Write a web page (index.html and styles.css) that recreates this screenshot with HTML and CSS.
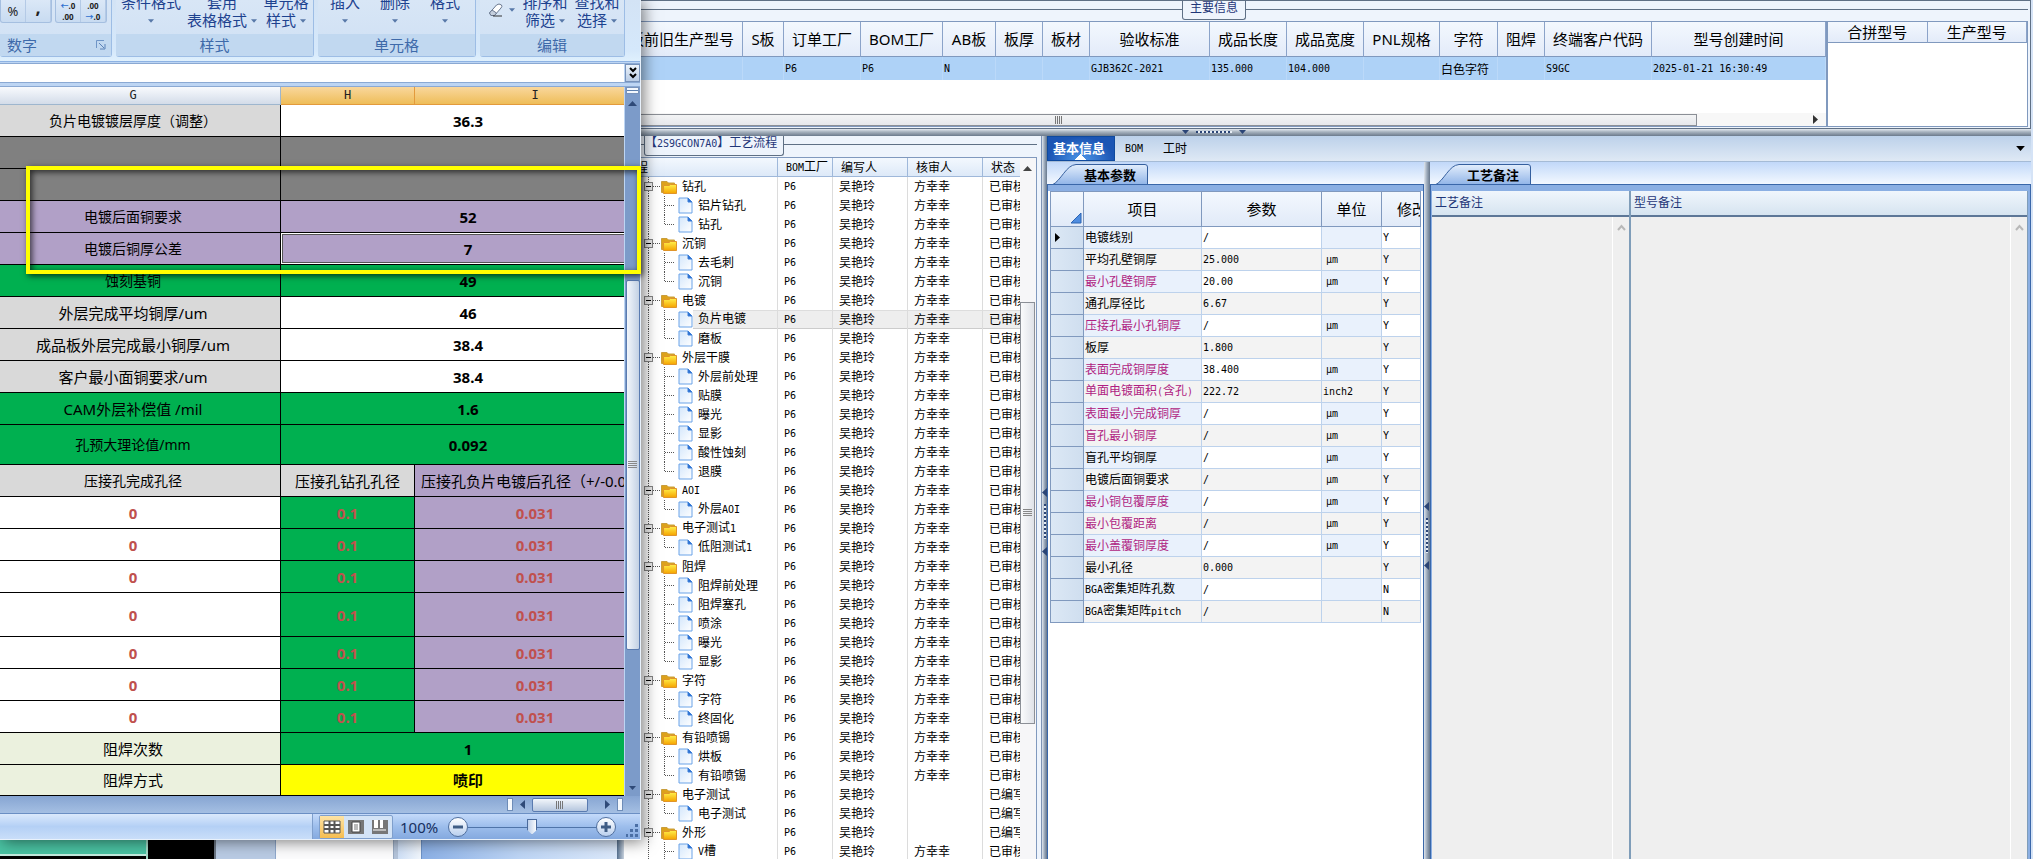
FILE: index.html
```html
<!DOCTYPE html>
<html lang="zh-CN">
<head>
    <meta charset="UTF-8">
    <meta name="viewport" content="width=device-width, initial-scale=1.0">
    <title>工艺流程</title>
    <link rel="stylesheet" href="styles.css">
</head>
<body>
    <svg class="symbols" aria-hidden="true">
        <linearGradient id="gold" x1="0" y1="0" x2="0" y2="1"><stop offset="0" stop-color="#fff04a"/><stop offset="1" stop-color="#f5a300"/></linearGradient>
        <linearGradient id="paper" x1="0" y1="0" x2="1" y2="1"><stop offset="0" stop-color="#d3e6fb"/><stop offset="1" stop-color="#ffffff"/></linearGradient>
        <symbol id="folder" viewBox="0 0 16 14">
            <path d="M0.5 12.5V1.5H6L7.5 3H13.5V12.5Z" fill="#dda21c" stroke="#c99e3d"/>
            <path d="M2.5 13.5V5.5H8L9.5 4.5H15.5V13.5Z" fill="url(#gold)" stroke="#e0952a"/>
        </symbol>
        <symbol id="file" viewBox="0 0 15 17">
            <path d="M1 1H10L14 5V16H1Z" fill="url(#paper)" stroke="#6ba3e8"/>
            <path d="M10 1V5H14Z" fill="#2a6fd0" stroke="#3c7fd8"/>
        </symbol>
        <symbol id="minus" viewBox="0 0 9 9">
            <rect x="0.5" y="0.5" width="8" height="8" fill="#ececec" stroke="#848484"/>
            <path d="M2 4.5H7" stroke="#000"/>
        </symbol>
        <symbol id="down" viewBox="0 0 7 4"><path d="M0 0H7L3.5 4Z" fill="currentColor"/></symbol>
        <symbol id="up" viewBox="0 0 9 5"><path d="M0 5H9L4.5 0Z" fill="currentColor"/></symbol>
        <symbol id="left" viewBox="0 0 5 9"><path d="M5 0V9L0 4.5Z" fill="currentColor"/></symbol>
        <symbol id="right" viewBox="0 0 5 9"><path d="M0 0V9L5 4.5Z" fill="currentColor"/></symbol>
    </svg>

    <div class="desktop">
        <div class="erp">
            <section class="main-info">
                <div class="caption-row"><span class="caption main-caption">主要信息</span></div>
                <div class="info-body">
                    <div class="info-left">
                        <table class="info-table">
                            <colgroup>
                                <col class="w119"><col class="w41"><col class="w77"><col class="w82"><col class="w53"><col class="w47"><col class="w47"><col class="w120"><col class="w77"><col class="w77"><col class="w76"><col class="w58"><col class="w47"><col class="w107"><col>
                            </colgroup>
                            <thead>
                                <tr><th class="cut">投板前旧生产型号</th><th>S板</th><th>订单工厂</th><th>BOM工厂</th><th>AB板</th><th>板厚</th><th>板材</th><th>验收标准</th><th>成品长度</th><th>成品宽度</th><th>PNL规格</th><th>字符</th><th>阻焊</th><th>终端客户代码</th><th>型号创建时间</th></tr>
                            </thead>
                            <tbody>
                                <tr><td></td><td></td><td>P6</td><td>P6</td><td>N</td><td></td><td></td><td>GJB362C-2021</td><td>135.000</td><td>104.000</td><td></td><td class="cjk">白色字符</td><td></td><td>S9GC</td><td>2025-01-21 16:30:49</td></tr>
                            </tbody>
                        </table>
                        <div class="hscroll">
                            <div class="hthumb"><span class="grip"></span></div>
                            <svg class="arrow-v"><use href="#right"/></svg>
                        </div>
                    </div>
                    <table class="merge-table">
                        <tr><th>合拼型号</th><th>生产型号</th></tr>
                        <tr><td></td><td></td></tr>
                    </table>
                </div>
            </section>
            <div class="splitter-h">
                <div class="handle-h"><svg class="arrow-h"><use href="#down"/></svg><span class="dots-h"></span><svg class="arrow-h"><use href="#down"/></svg></div>
            </div>
            <div class="lower">
                <section class="flow">
                    <div class="caption-row flow-row"><span class="caption flow-caption">【<span class="mono">2S9GCON7A0</span>】工艺流程</span></div>
                    <div class="tree-wrap">
                        <table class="tree">
                            <colgroup><col><col class="w55"><col class="w75"><col class="w75"><col class="w37"></colgroup>
                            <thead><tr><th class="first">程</th><th><span class="mono">BOM</span>工厂</th><th>编写人</th><th>核审人</th><th>状态</th></tr></thead>
                            <tbody id="treeRows"></tbody>
                        </table>
                        <div class="vscroll">
                            <svg class="arrow-up"><use href="#up"/></svg>
                            <div class="vthumb"><span class="grip-v"></span></div>
                        </div>
                    </div>
                </section>
                <div class="splitter-v">
                    <div class="handle-v"><svg class="arrow-v"><use href="#left"/></svg><span class="dots-v"></span><svg class="arrow-v"><use href="#left"/></svg></div>
                </div>
                <div class="detail">
                    <nav class="tabs">
                        <button class="tab active">基本信息</button>
                        <button class="tab"><span class="mono">BOM</span></button>
                        <button class="tab">工时</button>
                        <button class="more" aria-label="更多"><svg><use href="#down"/></svg></button>
                    </nav>
                    <div class="detail-body">
                        <section class="params">
                            <div class="subtabs">
                                <button class="subtab"><svg viewBox="0 0 96 21"><defs><linearGradient id="tabfill" x1="0" y1="0" x2="0" y2="1"><stop offset="0" stop-color="#e3eefc"/><stop offset="1" stop-color="#8fb3e7"/></linearGradient></defs><path d="M0 21C9 17 14 1 24 0.5H93Q95.500 0.500 95.500 3V21" fill="url(#tabfill)" stroke="#355f9e"/></svg><span>基本参数</span></button>
                            </div>
                            <div class="frame">
                                <table class="grid">
                                    <colgroup><col class="w33"><col class="w118"><col class="w120"><col class="w60"><col></colgroup>
                                    <thead><tr><th class="corner"><svg viewBox="0 0 12 12"><path d="M11 1V11H1Z" fill="#4f8de0" stroke="#2d64b3"/></svg></th><th>项目</th><th>参数</th><th>单位</th><th class="last">修改</th></tr></thead>
                                    <tbody id="paramRows"></tbody>
                                </table>
                            </div>
                        </section>
                        <div class="splitter-v right-split">
                            <div class="handle-v"><svg class="arrow-v"><use href="#left"/></svg><span class="dots-v"></span><svg class="arrow-v"><use href="#left"/></svg></div>
                        </div>
                        <section class="remarks">
                            <div class="subtabs">
                                <button class="subtab"><svg viewBox="0 0 96 21"><path d="M0 21C9 17 14 1 24 0.5H93Q95.500 0.500 95.500 3V21" fill="url(#tabfill)" stroke="#355f9e"/></svg><span>工艺备注</span></button>
                            </div>
                            <div class="frame remark-frame">
                                <div class="remark narrow">
                                    <label for="processNote">工艺备注</label>
                                    <div class="note"><textarea id="processNote"></textarea><span class="note-bar"><svg viewBox="0 0 9 7"><path d="M1 6L4.5 2L8 6" fill="none" stroke="#b8b8b8" stroke-width="2"/></svg></span></div>
                                </div>
                                <div class="remark">
                                    <label for="modelNote">型号备注</label>
                                    <div class="note"><textarea id="modelNote"></textarea><span class="note-bar"><svg viewBox="0 0 9 7"><path d="M1 6L4.5 2L8 6" fill="none" stroke="#b8b8b8" stroke-width="2"/></svg></span></div>
                                </div>
                            </div>
                        </section>
                    </div>
                </div>
            </div>
        </div>

        <div class="backdrop">
            <span class="bd-green"></span><span class="bd-black"></span><span class="bd-blue"></span><span class="bd-white"></span><span class="bd-pale"></span><span class="bd-sky"></span><span class="bd-edge"></span>
        </div>

        <div class="excel">
            <div class="ribbon">
                <div class="group g-number">
                    <div class="tools">
                        <div class="btn-pair"><button>%</button><button class="comma">,</button></div>
                        <div class="btn-pair small"><button><i>←</i>.0<br>.00</button><button>.00<br><i>→</i>.0</button></div>
                    </div>
                    <div class="group-name">数字<svg class="launcher" viewBox="0 0 10 10"><path d="M0.500 8V0.500H8" fill="none" stroke="#6f95c7"/><path d="M3 3L8 8M9 4V9H4" fill="none" stroke="#5b82b8"/></svg></div>
                </div>
                <div class="group g-style">
                    <div class="tools">
                        <button class="t60">条件格式<br><svg><use href="#down"/></svg></button>
                        <button class="t72">套用<br>表格格式 <svg><use href="#down"/></svg></button>
                        <button class="t45">单元格<br>样式 <svg><use href="#down"/></svg></button>
                    </div>
                    <div class="group-name">样式</div>
                </div>
                <div class="group g-cell">
                    <div class="tools">
                        <button class="t30">插入<br><svg><use href="#down"/></svg></button>
                        <button class="t30">删除<br><svg><use href="#down"/></svg></button>
                        <button class="t30">格式<br><svg><use href="#down"/></svg></button>
                    </div>
                    <div class="group-name">单元格</div>
                </div>
                <div class="group g-edit">
                    <div class="tools">
                        <button class="eraser" aria-label="清除"><svg class="rubber" viewBox="0 0 16 14"><path d="M1.500 10L8.500 2Q11 0 13.500 2Q14.500 3.500 13 5L6.500 12.500H3Z" fill="#fff" stroke="#6a7890"/><path d="M1.500 10L4 7L8.500 10L6.500 12.500H3Z" fill="#c5cfdd" stroke="#6a7890"/><path d="M5 13H14" stroke="#333"/></svg><svg><use href="#down"/></svg></button>
                        <button class="t45">排序和<br>筛选 <svg><use href="#down"/></svg></button>
                        <button class="t45">查找和<br>选择 <svg><use href="#down"/></svg></button>
                    </div>
                    <div class="group-name">编辑</div>
                </div>
            </div>
            <div class="formula">
                <input type="text" aria-label="编辑栏">
                <button aria-label="展开编辑栏"><svg viewBox="0 0 8 12"><path d="M1 1L4 4L7 1M1 7L4 10L7 7" fill="none" stroke="#000" stroke-width="2"/></svg></button>
            </div>
            <div class="sheet-row">
                <div class="sheet-view">
                    <table class="sheet">
                        <colgroup><col class="col-g"><col class="col-h"><col class="col-i"></colgroup>
                        <thead><tr><th>G</th><th class="sel">H</th><th class="sel">I</th></tr></thead>
                        <tbody>
                            <tr><td class="grey">负片电镀镀层厚度（调整）</td><td colspan="2">36.3</td></tr>
                            <tr><td class="dark"></td><td class="dark" colspan="2"></td></tr>
                            <tr><td class="dark"></td><td class="dark" colspan="2"></td></tr>
                            <tr><td class="purple">电镀后面铜要求</td><td class="purple" colspan="2">52</td></tr>
                            <tr><td class="purple">电镀后铜厚公差</td><td class="purple current" colspan="2">7</td></tr>
                            <tr><td class="green">蚀刻基铜</td><td class="green" colspan="2">49</td></tr>
                            <tr><td class="grey big">外层完成平均铜厚/um</td><td colspan="2">46</td></tr>
                            <tr><td class="grey big">成品板外层完成最小铜厚/um</td><td colspan="2">38.4</td></tr>
                            <tr><td class="grey big">客户最小面铜要求/um</td><td colspan="2">38.4</td></tr>
                            <tr><td class="green big">CAM外层补偿值 /mil</td><td class="green" colspan="2">1.6</td></tr>
                            <tr class="mid"><td class="green">孔预大理论值/mm</td><td class="green" colspan="2">0.092</td></tr>
                            <tr><td class="grey">压接孔完成孔径</td><td class="grey name">压接孔钻孔孔径</td><td class="purple name start">压接孔负片电镀后孔径（+/-0.05mm）</td></tr>
                            <tr class="red"><td>0</td><td class="green">0.1</td><td class="purple">0.031</td></tr>
                            <tr class="red"><td>0</td><td class="green">0.1</td><td class="purple">0.031</td></tr>
                            <tr class="red"><td>0</td><td class="green">0.1</td><td class="purple">0.031</td></tr>
                            <tr class="red tall"><td>0</td><td class="green">0.1</td><td class="purple">0.031</td></tr>
                            <tr class="red"><td>0</td><td class="green">0.1</td><td class="purple">0.031</td></tr>
                            <tr class="red"><td>0</td><td class="green">0.1</td><td class="purple">0.031</td></tr>
                            <tr class="red"><td>0</td><td class="green">0.1</td><td class="purple">0.031</td></tr>
                            <tr><td class="pale big">阻焊次数</td><td class="green" colspan="2">1</td></tr>
                            <tr class="short"><td class="pale big">阻焊方式</td><td class="yellow" colspan="2">喷印</td></tr>
                        </tbody>
                    </table>
                </div>
                <div class="sheet-scroll">
                    <span class="split-box"></span>
                    <svg class="arrow-up"><use href="#up"/></svg>
                    <span class="sheet-thumb"><span class="grip-v"></span></span>
                    <svg class="arrow-h"><use href="#down"/></svg>
                </div>
            </div>
            <div class="sheet-hscroll">
                <span class="stop"></span>
                <svg class="arrow-v"><use href="#left"/></svg>
                <span class="sheet-hthumb"><span class="grip"></span></span>
                <svg class="arrow-v"><use href="#right"/></svg>
                <span class="stop"></span>
            </div>
            <div class="status">
                <div class="status-text"></div>
                <div class="views">
                    <button class="on" aria-label="普通"><svg viewBox="0 0 18 16"><path d="M1 2H17V14H1Z" fill="#fff" stroke="#555"/><path d="M1 6H17M1 10H17M6.500 2V14M11.500 2V14" stroke="#555" stroke-width="2"/></svg></button>
                    <button aria-label="页面布局"><svg viewBox="0 0 18 16"><path d="M1 1H17V15H1Z" fill="#777"/><path d="M5 3H13V13H5Z" fill="#fff" stroke="#444"/><path d="M7 6H11M7 8H11M7 10H11" stroke="#777"/></svg></button>
                    <button aria-label="分页预览"><svg viewBox="0 0 18 16"><path d="M1 1H17V15H1Z" fill="#777"/><path d="M3 1H7V9H3ZM9 1H12V9H9Z" fill="#fff"/><path d="M2 11H15" stroke="#bbb" stroke-width="2"/></svg></button>
                </div>
                <label class="zoom" for="zoom">100%</label>
                <button class="round" aria-label="缩小"><svg viewBox="0 0 12 12"><path d="M1 6H11" stroke="#3f5d85" stroke-width="3"/></svg></button>
                <input id="zoom" type="range" min="0" max="100" value="50">
                <button class="round" aria-label="放大"><svg viewBox="0 0 12 12"><path d="M1 6H11M6 1V11" stroke="#3f5d85" stroke-width="3"/></svg></button>
                <svg class="resize" viewBox="0 0 13 13"><path d="M9 0H12V3H9ZM9 5H12V8H9ZM9 10H12V13H9ZM4 5H7V8H4ZM4 10H7V13H4ZM0 10H2V13H0Z" fill="#4a6fa5"/></svg>
            </div>
            <div class="highlight"></div>
        </div>
    </div>

    <script>
        const flow = [
            ['钻孔', ['铝片钻孔', '钻孔']],
            ['沉铜', ['去毛刺', '沉铜']],
            ['电镀', ['负片电镀', '磨板']],
            ['外层干膜', ['外层前处理', '贴膜', '曝光', '显影', '酸性蚀刻', '退膜']],
            ['AOI', ['外层AOI']],
            ['电子测试1', ['低阻测试1']],
            ['阻焊', ['阻焊前处理', '阻焊塞孔', '喷涂', '曝光', '显影']],
            ['字符', ['字符', '终固化']],
            ['有铅喷锡', ['烘板', '有铅喷锡']],
            ['电子测试', ['电子测试']],
            ['外形', ['V槽', '铣板']]
        ];
        // steps that are written but not reviewed yet
        const pending = ['电子测试', '外形'];

        const mono = text => text.replace(/[A-Za-z0-9()]+/g, '<span class="mono">$&</span>');

        function treeRow(name, cls, icon, reviewed) {
            const box = cls === 'root' ? '<svg class="box"><use href="#minus"/></svg>' : '';
            return `<tr class="${name === '负片电镀' ? 'selected' : ''}">
                <td class="node ${cls}"><div>${box}<svg class="${icon}"><use href="#${icon}"/></svg><span class="label">${mono(name)}</span></div></td>
                <td class="mono">P6</td><td>吴艳玲</td><td>${reviewed ? '方幸幸' : ''}</td><td>${reviewed ? '已审核' : '已编写'}</td></tr>`;
        }

        let tree = '';
        flow.forEach(([name, steps]) => {
            tree += treeRow(name, 'root', 'folder', !pending.includes(name));
            steps.forEach((step, i) => {
                const cls = i === steps.length - 1 ? 'leaf end' : 'leaf';
                tree += treeRow(step, cls, 'file', !pending.includes(step));
            });
        });
        document.getElementById('treeRows').innerHTML = tree;

        const params = [
            ['电镀线别', '/', '', 'Y', 0],
            ['平均孔壁铜厚', '25.000', 'μm', 'Y', 0],
            ['最小孔壁铜厚', '20.00', 'μm', 'Y', 1],
            ['通孔厚径比', '6.67', '', 'Y', 0],
            ['压接孔最小孔铜厚', '/', 'μm', 'Y', 1],
            ['板厚', '1.800', '', 'Y', 0],
            ['表面完成铜厚度', '38.400', 'μm', 'Y', 1],
            ['单面电镀面积(含孔)', '222.72', 'inch2', 'Y', 1],
            ['表面最小完成铜厚', '/', 'μm', 'Y', 1],
            ['盲孔最小铜厚', '/', 'μm', 'Y', 1],
            ['盲孔平均铜厚', '/', 'μm', 'Y', 0],
            ['电镀后面铜要求', '/', 'μm', 'Y', 0],
            ['最小铜包覆厚度', '/', 'μm', 'Y', 1],
            ['最小包覆距离', '/', 'μm', 'Y', 1],
            ['最小盖覆铜厚度', '/', 'μm', 'Y', 1],
            ['最小孔径', '0.000', '', 'Y', 0],
            ['BGA密集矩阵孔数', '/', '', 'N', 0],
            ['BGA密集矩阵pitch', '/', '', 'N', 0]
        ];
        document.getElementById('paramRows').innerHTML = params.map(([name, value, unit, edit, key], i) =>
            `<tr><th>${i === 0 ? '<svg class="arrow-v"><use href="#right"/></svg>' : ''}</th>
                <td class="item${key ? ' key' : ''}">${mono(name)}</td><td class="mono">${value}</td>
                <td class="unit mono${unit === 'μm' ? ' um' : ''}">${unit}</td><td class="mono last">${edit}</td></tr>`
        ).join('');
    </script>
</body>
</html>
```

FILE: styles.css
```css
* {
    box-sizing: border-box;
}

body, html {
    margin: 0;
    padding: 0;
    height: 100%;
    overflow: hidden;
}

body {
    font-family: "Noto Sans", "Noto Sans CJK SC", sans-serif;
    font-size: 12px;
    color: #000;
}

button {
    margin: 0;
    padding: 0;
    border: 0;
    background: none;
    font: inherit;
    color: inherit;
}

svg {
    display: block;
    flex: none;
}

table {
    border-collapse: separate;
    border-spacing: 0;
    table-layout: fixed;
}

th, td {
    padding: 0;
    font-weight: normal;
    white-space: nowrap;
    overflow: hidden;
}

.symbols {
    position: absolute;
    width: 0;
    height: 0;
}

.mono {
    font-family: "DejaVu Sans Mono", "Noto Sans CJK SC", monospace;
    font-size: 10px;
}

.desktop {
    position: relative;
    height: 100%;
    background: #dfe9f7;
}

/* ---------- ERP window ---------- */

.erp {
    position: absolute;
    left: 624px;
    right: 0;
    top: 0;
    bottom: 0;
    display: flex;
    flex-direction: column;
    padding-right: 2px;
    background: #d5e3f6;
}

.w33 { width: 33px; }
.w37 { width: 37px; }
.w41 { width: 41px; }
.w47 { width: 47px; }
.w53 { width: 53px; }
.w55 { width: 55px; }
.w58 { width: 58px; }
.w60 { width: 60px; }
.w75 { width: 75px; }
.w76 { width: 76px; }
.w77 { width: 77px; }
.w82 { width: 82px; }
.w107 { width: 107px; }
.w118 { width: 118px; }
.w119 { width: 119px; }
.w120 { width: 120px; }

.main-info {
    border-top: 1px solid #5f7085;
    border-bottom: 1px solid #5f7085;
    border-right: 1px solid #5f7085;
    background: #eef4fc;
    padding: 0 2px 1px 0;
}

.caption-row {
    display: flex;
    height: 20px;
    background: linear-gradient(#5f7085, #5f7085) 0 8px / 100% 1px no-repeat;
}

.caption {
    height: 19px;
    line-height: 14px;
    border: 1px solid #5f7085;
    border-top: 0;
    border-radius: 0 0 3px 3px;
    background: #eef4fc;
    color: #1f3678;
    white-space: nowrap;
}

.main-caption {
    margin-left: 558px;
    padding: 0 7px;
}

.info-body {
    display: flex;
    height: 106px;
    border: 1px solid #8099be;
    border-left: 0;
}

.info-left {
    flex: 1;
    display: flex;
    flex-direction: column;
    justify-content: space-between;
    background: #fff;
}

.info-table {
    width: 100%;
}

.info-table th, .merge-table th {
    height: 35px;
    padding-bottom: 2px;
    font-size: 15px;
    background: linear-gradient(#f3f8fe, #e3ebf9);
    border-right: 1px solid #8ba3c9;
    border-bottom: 1px solid #8099be;
}

.info-table th.cut {
    direction: rtl;
    text-align: right;
    padding-right: 9px;
}

.info-table td {
    height: 23px;
    padding-left: 1px;
    font-family: "DejaVu Sans Mono", monospace;
    font-size: 10px;
    background: #aed2f7;
    border-right: 1px solid #bbd9f9;
}

.info-table td.cjk {
    font-family: "Noto Sans CJK SC", sans-serif;
    font-size: 12px;
    line-height: 18px;
}

.hscroll {
    display: flex;
    align-items: center;
    justify-content: space-between;
    height: 13px;
    padding-right: 8px;
    background: #f7f7f7;
    color: #333;
}

.hthumb {
    display: flex;
    align-items: center;
    width: 1073px;
    height: 12px;
    padding-left: 430px;
    border: 1px solid #8b8f96;
    background: linear-gradient(#f3f4f5, #e6e8ec);
}

.grip {
    width: 8px;
    height: 8px;
    background: repeating-linear-gradient(90deg, #777 0 1px, transparent 1px 2px);
}

.grip-v {
    width: 9px;
    height: 8px;
    background: repeating-linear-gradient(#888 0 1px, transparent 1px 2px);
}

.arrow-v {
    width: 5px;
    height: 9px;
}

.arrow-h {
    width: 7px;
    height: 4px;
}

.arrow-up {
    width: 9px;
    height: 5px;
}

.merge-table {
    width: 201px;
    border-left: 2px solid #8099be;
    background: #fff;
}

.merge-table th {
    height: 21px;
    padding-bottom: 0;
    line-height: 20px;
}

.merge-table td {
    height: 83px;
}

.splitter-h {
    flex: none;
    height: 7px;
    background: linear-gradient(#e3e9f0, #a9b4c0 40%, #6b7a8c);
}

.handle-h {
    display: flex;
    align-items: center;
    justify-content: space-between;
    width: 64px;
    height: 6px;
    margin-left: 558px;
    color: #2b4576;
}

.dots-h {
    width: 36px;
    height: 2px;
    background: repeating-linear-gradient(90deg, #2b4576 0 2px, #e6edf5 2px 4px);
}

.lower {
    flex: 1;
    display: flex;
    min-height: 0;
}

/* ---------- process flow tree ---------- */

.flow {
    display: flex;
    flex-direction: column;
    width: 418px;
    padding-right: 4px;
    background: #eef4fc;
    border-right: 1px solid #7d93b4;
}

.flow-row {
    height: 21px;
    flex: none;
}

.flow-caption {
    margin-left: 20px;
    height: 20px;
    padding: 0 6px 0 0;
}

.tree-wrap {
    flex: 1;
    display: flex;
    min-height: 0;
    overflow: hidden;
    background: #fff;
    border-top: 1px solid #8099be;
    border-right: 1px solid #8099be;
}

.tree {
    width: 397px;
}

.tree thead th {
    height: 18px;
    line-height: 17px;
    text-align: left;
    padding-left: 8px;
    background: linear-gradient(#f3f8fe, #dde9f8);
    border-right: 1px solid #9fb8da;
    border-bottom: 1px solid #9fb8da;
}

.tree thead th.first {
    padding-left: 12px;
}

.tree thead th:last-child {
    border-right: 0;
}

.tree td {
    height: 19px;
    line-height: 18px;
    padding-left: 6px;
    border-right: 1px solid #dcdcdc;
}

.tree td:last-child {
    border-right: 0;
}

.tree .node {
    padding: 0;
    background-repeat: no-repeat;
}

.tree .node div {
    display: flex;
    align-items: center;
    height: 19px;
}

.tree .root {
    background-image:
        repeating-linear-gradient(#555 0 1px, transparent 1px 2px),
        repeating-linear-gradient(90deg, #555 0 1px, transparent 1px 2px);
    background-position: 24px 0, 29px 9px;
    background-size: 1px 100%, 7px 1px;
}

.tree .leaf {
    background-image:
        repeating-linear-gradient(#555 0 1px, transparent 1px 2px),
        repeating-linear-gradient(#555 0 1px, transparent 1px 2px),
        repeating-linear-gradient(90deg, #555 0 1px, transparent 1px 2px);
    background-position: 24px 0, 40px 0, 41px 9px;
    background-size: 1px 100%, 1px 100%, 10px 1px;
}

.tree .end {
    background-size: 1px 100%, 1px 10px, 10px 1px;
}

.tree .root div {
    padding-left: 20px;
}

.tree .leaf div {
    padding-left: 54px;
}

.box {
    width: 9px;
    height: 9px;
    margin-right: 8px;
}

.folder {
    width: 16px;
    height: 14px;
}

.file {
    width: 15px;
    height: 17px;
}

.label {
    padding-left: 5px;
}

.selected td {
    background-color: #eee;
    box-shadow: inset 0 1px #ddd, inset 0 -1px #ccc;
}

.selected .node {
    box-shadow: none;
    background-color: #fff;
}

.selected .label {
    flex: 1;
    height: 19px;
    background: #eee;
    box-shadow: inset 0 1px #ddd, inset 0 -1px #ccc;
}

.vscroll {
    flex: 1;
    display: flex;
    flex-direction: column;
    align-items: center;
    padding: 8px 1px 0 0;
    background: #f6f6f8;
    color: #444;
}

.vthumb {
    display: flex;
    align-items: center;
    justify-content: center;
    width: 15px;
    height: 422px;
    margin-top: 131px;
    border: 1px solid #8b8f96;
    background: linear-gradient(90deg, #fafbfc, #dfe2e8);
}

.splitter-v {
    flex: none;
    display: flex;
    align-items: center;
    width: 5px;
    background: linear-gradient(90deg, #dfe6ee, #9ba9ba 50%, #66778c);
}

.handle-v {
    display: flex;
    flex-direction: column;
    align-items: center;
    justify-content: space-between;
    height: 68px;
    color: #2b4576;
    margin-top: 48px;
}

.dots-v {
    width: 2px;
    height: 35px;
    background: repeating-linear-gradient(#2b4576 0 2px, #e6edf5 2px 4px);
}

/* ---------- detail panel ---------- */

.detail {
    flex: 1;
    display: flex;
    flex-direction: column;
    min-width: 0;
}

.tabs {
    display: flex;
    height: 26px;
    align-items: center;
    background: linear-gradient(#bcd1ea, #dfe9f5);
    border-bottom: 1px solid #a5bbd6;
}

.tab {
    height: 25px;
    padding: 0 10px;
    line-height: 20px;
}

.tab.active {
    padding: 0 9px 2px 5px;
    font-size: 13px;
    font-weight: bold;
    color: #fff;
    border: 1px solid #0f4a9e;
    background:
        conic-gradient(from 135deg at 50% 0, #fff 0 90deg, transparent 90deg) 50% 100% / 12px 6px no-repeat,
        radial-gradient(at 50% 100%, #4d96e8, #1b55b4 70%);
}

.more {
    margin-left: auto;
    padding: 8px 6px;
}

.more svg {
    width: 9px;
    height: 5px;
}

.detail-body {
    flex: 1;
    display: flex;
    min-height: 0;
}

.params {
    display: flex;
    flex-direction: column;
    width: 377px;
}

.subtabs {
    flex: none;
    height: 22px;
    padding: 2px 0 0 5px;
    background: linear-gradient(#c1d8f9, #f3f8ff);
}

.subtab {
    display: grid;
    width: 96px;
    height: 21px;
    align-items: center;
    font-size: 13px;
    font-weight: bold;
}

.subtab svg, .subtab span {
    grid-area: 1 / 1;
}

.subtab svg {
    width: 96px;
    height: 21px;
}

.subtab span {
    padding-left: 20px;
    line-height: 20px;
}

.frame {
    flex: 1;
    min-height: 0;
    padding: 6px 2px 0 2px;
    border: 1px solid #3a67a9;
    border-bottom: 0;
    background: #8bafe3;
    overflow: hidden;
}

.params .frame {
    background: linear-gradient(#8bafe3, #8bafe3) 0 0 / 100% 6px no-repeat, #fff;
}

.grid {
    width: 100%;
    border-left: 1px solid #8099be;
}

.grid thead th {
    height: 36px;
    padding-bottom: 1px;
    font-size: 15px;
    background: linear-gradient(#f3f8fe, #e1eaf8);
    border-right: 1px solid #8099be;
    border-bottom: 1px solid #8099be;
    border-top: 1px solid #8099be;
}

.grid thead th.corner {
    vertical-align: bottom;
    padding: 0 2px 2px 19px;
}

.corner svg {
    width: 12px;
    height: 12px;
}

.grid thead th.last {
    text-align: left;
    padding-left: 15px;
}

.grid tbody th {
    height: 22px;
    padding-left: 4px;
    background: linear-gradient(90deg, #dce8f5, #cfdeef);
    border-right: 1px solid #8099be;
    border-bottom: 1px solid #8099be;
}

.grid td {
    height: 22px;
    line-height: 20px;
    padding-left: 1px;
    border-right: 1px solid #bdd2ec;
    border-bottom: 1px solid #bdd2ec;
}

.grid tr:nth-child(odd) td {
    background: #fff;
}

.grid tr:nth-child(odd) .item, .grid tr:nth-child(odd) .unit {
    background: #e9f1fc;
}

.grid tr:nth-child(even) td {
    background: #f3f3f3;
}

.grid .key {
    color: #b01e82;
}

.grid .um {
    padding-left: 4px;
}

.right-split {
    width: 6px;
}

.right-split .handle-v {
    margin-top: 50px;
}

.remarks {
    flex: 1;
    display: flex;
    flex-direction: column;
    min-width: 0;
}

.remark-frame {
    display: flex;
    padding: 6px 2px 0 1px;
}

.remark {
    flex: 1;
    display: flex;
    flex-direction: column;
    background: #efefef;
    border-right: 1px solid #7f9db9;
}

.narrow {
    flex: none;
    width: 199px;
    border-right: 2px solid #7f9db9;
}

.remark label {
    height: 26px;
    padding-left: 3px;
    line-height: 24px;
    color: #1f3678;
    background: linear-gradient(#f0f6fc, #d6e4f0);
    border-bottom: 2px solid #5d7797;
}

.note {
    flex: 1;
    display: flex;
}

.note textarea {
    flex: 1;
    min-width: 0;
    border: 0;
    resize: none;
    background: #efefef;
}

.note-bar {
    width: 17px;
    padding: 7px 4px;
    border-left: 1px solid #fff;
}

.note-bar svg {
    width: 9px;
    height: 7px;
}

/* ---------- what shows under the spreadsheet window ---------- */

.backdrop {
    position: absolute;
    left: 0;
    bottom: 0;
    display: flex;
    width: 624px;
    height: 40px;
}

.bd-green {
    width: 148px;
    border-right: 2px solid #a5dcc9;
    background: linear-gradient(#4ac3a3 35px, #c4ebdf 35px 37px, #000 37px);
}

.bd-black {
    width: 66px;
    background: #000;
}

.bd-blue {
    width: 62px;
    border-left: 2px solid #6b7684;
    border-right: 1px solid #8fa8cc;
    background: #b9cbe4;
}

.bd-white {
    width: 118px;
    background: #fcfcfd;
    border-right: 1px solid #9aacc4;
}

.bd-pale {
    width: 28px;
    border-left: 4px solid #b4c4da;
    border-right: 1px solid #6d93c8;
    background: linear-gradient(90deg, #cfe0f7, #f2f7fd);
}

.bd-sky {
    flex: 1;
    background: linear-gradient(90deg, #8bb0e6, #bdd5f5 50%, #dce9fb);
}

.bd-edge {
    width: 7px;
    background: linear-gradient(90deg, #55708f, #c9d3df);
}

/* ---------- spreadsheet window ---------- */

.excel {
    position: absolute;
    left: 0;
    top: 0;
    width: 641px;
    background: #bdd5f3;
    border-right: 1px solid #e8f1fb;
    border-bottom: 1px solid #e8f1fb;
    box-shadow: 3px 2px 14px rgba(0, 0, 0, 0.5);
}

.ribbon {
    display: flex;
    gap: 4px;
    height: 62px;
    padding-bottom: 4px;
    overflow: hidden;
    background: linear-gradient(#d3e3f5, #d5e8fb 50px, #dff0fd);
    border-bottom: 1px solid #8db2e3;
    color: #1d428f;
    font-size: 15px;
}

.group {
    display: flex;
    flex-direction: column;
    border-right: 1px solid #9dbde5;
    border-bottom: 1px solid #9dbde5;
    border-radius: 0 0 3px 3px;
    background: linear-gradient(#d8e6f6, #cfe0f4);
}

.g-number { width: 112px; }
.g-style { width: 198px; }
.g-cell { width: 158px; }
.g-edit { width: 145px; }

.tools {
    display: flex;
    height: 35px;
}

.tools button {
    height: 36px;
    margin-top: -7px;
    line-height: 18px;
    white-space: nowrap;
    text-align: center;
}

.tools button svg {
    display: inline-block;
    width: 6px;
    height: 4px;
    vertical-align: 3px;
    color: #5778a8;
}

.g-style .tools {
    gap: 5px;
    padding-left: 5px;
}

.g-cell .tools {
    gap: 20px;
    padding-left: 12px;
}

.g-edit .tools {
    gap: 6px;
    padding-left: 8px;
}

.t30 { width: 30px; }
.t45 { width: 46px; }
.t60 { width: 60px; }
.t72 { width: 72px; }

.group-name {
    display: flex;
    justify-content: center;
    align-items: center;
    height: 22px;
    line-height: 21px;
    background: #c1d8f0;
    color: #3e6aaa;
}

.g-number .group-name {
    justify-content: space-between;
    padding: 0 5px 0 7px;
}

.launcher {
    width: 10px;
    height: 10px;
}

.btn-pair {
    display: flex;
    width: 52px;
    height: 23px;
    margin-right: 3px;
    border: 1px solid #a5bfe0;
    border-top: 0;
    border-radius: 0 0 3px 3px;
    background: linear-gradient(#dbe8f7, #c8dbf1);
    overflow: hidden;
}

.btn-pair button {
    flex: 1;
    height: 22px;
    margin: 0;
    line-height: 20px;
    font-size: 13px;
    color: #222;
    border-right: 1px solid #b4cae6;
}

.btn-pair .comma {
    padding-bottom: 8px;
    font-weight: bold;
    font-size: 18px;
    line-height: 14px;
}

.btn-pair.small button {
    font-size: 8px;
    line-height: 11px;
    font-weight: bold;
}

.small i {
    color: #2d6fd0;
    font-style: normal;
}

.tools .eraser {
    display: flex;
    align-items: center;
    gap: 5px;
    width: 28px;
    height: 20px;
    margin-top: 0;
}

.tools .eraser .rubber {
    width: 16px;
    height: 14px;
}

.formula {
    display: flex;
    gap: 1px;
    margin-top: 1px;
    height: 20px;
    border-top: 1px solid #8aa9d3;
    border-bottom: 1px solid #8aa9d3;
}

.formula input {
    flex: 1;
    min-width: 0;
    border: 0;
    padding: 0;
    background: #fff;
}

.formula button {
    display: flex;
    align-items: center;
    justify-content: center;
    width: 15px;
    border: 1px solid #7893bb;
    background: linear-gradient(#eef4fb, #b9cce6);
}

.formula button svg {
    width: 8px;
    height: 12px;
}

.sheet-row {
    display: flex;
    margin-top: 3px;
    border-top: 1px solid #8aa9d3;
}

.sheet-view {
    width: 624px;
    overflow: hidden;
}

.sheet {
    width: 656px;
}

.col-g { width: 281px; }
.col-h { width: 134px; }
.col-i { width: 241px; }

.sheet thead th {
    height: 18px;
    line-height: 17px;
    font-family: "DejaVu Sans Mono", monospace;
    font-size: 12px;
    color: #222;
    background: linear-gradient(#f8fafd, #d3dce9);
    border-right: 1px solid #9eb6ce;
    border-bottom: 1px solid #9eb6ce;
}

.sheet thead th.sel {
    background: linear-gradient(#f9d79c, #eebd59);
    border-right-color: #e39a3c;
    border-bottom-color: #e39a3c;
}

.sheet tbody tr {
    height: 32px;
}

.sheet tbody .short { height: 31px; }
.sheet tbody .mid { height: 40px; }
.sheet tbody .tall { height: 44px; }

.sheet tbody td {
    text-align: center;
    font-size: 15px;
    font-weight: bold;
    line-height: 20px;
    background: #fff;
    border-right: 1px solid #000;
    border-bottom: 1px solid #000;
}

.sheet td:first-child, .sheet th:first-child {
    padding-right: 14px;
}

.sheet tbody td:first-child {
    font-size: 14px;
    font-weight: normal;
}

.sheet tbody td.big:first-child {
    font-size: 15px;
}

.sheet tbody .red td {
    color: #c0504d;
    font-weight: bold;
    font-size: 15px;
}

.sheet tbody td.name {
    font-weight: normal;
}

.sheet tbody td.start {
    text-align: left;
    padding-left: 6px;
}

.sheet tbody td.grey { background: #d9d9d9; }
.sheet tbody td.dark { background: #808080; }
.sheet tbody td.purple { background: #b1a0c7; }
.sheet tbody td.green { background: #00b050; }
.sheet tbody td.pale { background: #ebf1de; }
.sheet tbody td.yellow { background: #ff0; }

.sheet tbody td.current {
    box-shadow: inset 0 0 0 1px #fff, inset 0 0 0 2px #555;
}

.sheet-scroll {
    flex: 1;
    display: flex;
    flex-direction: column;
    align-items: center;
    padding-bottom: 6px;
    margin-left: 1px;
    background: #7c9bc9;
    color: #2f4a78;
}

.split-box {
    width: 13px;
    height: 7px;
    border: 1px solid #7893bb;
    background: linear-gradient(#f4f8fd 2px, #5c7fae 2px 3px, #f4f8fd 3px);
}

.sheet-scroll .arrow-up {
    margin: 7px 0 174px 0;
}

.sheet-thumb {
    display: flex;
    align-items: center;
    justify-content: center;
    width: 14px;
    height: 370px;
    margin-bottom: auto;
    border: 1px solid #5a7bb0;
    border-radius: 2px;
    background: linear-gradient(90deg, #f2f6fb, #c3d1e4);
}

.sheet-hscroll {
    display: flex;
    align-items: center;
    justify-content: flex-end;
    gap: 7px;
    height: 17px;
    padding-right: 17px;
    background: linear-gradient(#86a5d2, #a5bfe3);
    color: #2f4a78;
}

.stop {
    width: 6px;
    height: 13px;
    border: 1px solid #6d8cb8;
    background: #f4f8fd;
}

.sheet-hthumb {
    display: flex;
    align-items: center;
    justify-content: center;
    width: 56px;
    height: 14px;
    margin-right: 10px;
    border: 1px solid #5a7bb0;
    border-radius: 2px;
    background: linear-gradient(#f2f6fb, #b5c6de);
}

.status {
    display: flex;
    align-items: center;
    height: 26px;
    background: linear-gradient(#c4dafa, #9dbeec 50%, #84a9df);
    border-top: 1px solid #6b8fc4;
}

.status-text {
    width: 313px;
    height: 25px;
    border-right: 1px solid #7f9fcc;
    background: linear-gradient(#dbe9fc, #b4d0f5 50%, #c9def9);
}

.views {
    display: flex;
    margin-left: 6px;
    border: 1px solid #7f9fcc;
    border-radius: 2px;
    background: #d3e3f6;
}

.views button {
    padding: 3px;
}

.views .on {
    background: linear-gradient(#fde3a5, #f6bd50);
}

.views svg {
    width: 18px;
    height: 16px;
}

.zoom {
    width: 48px;
    margin-left: 7px;
    font-size: 15px;
    color: #17305f;
}

.round {
    display: flex;
    align-items: center;
    justify-content: center;
    width: 20px;
    height: 20px;
    border: 1px solid #51709f;
    border-radius: 50%;
    background: linear-gradient(#fff, #b9cfee);
}

.round svg {
    width: 12px;
    height: 12px;
}

#zoom {
    appearance: none;
    width: 128px;
    height: 16px;
    margin: 0;
    background: linear-gradient(#4f74a8, #4f74a8) 0 8px / 100% 1px no-repeat;
}

#zoom::-webkit-slider-thumb {
    appearance: none;
    width: 10px;
    height: 16px;
    border: 0;
    background: linear-gradient(90deg, #b7cbe8, #fff);
    box-shadow: inset 0 0 0 1px #4a6a9c;
    clip-path: polygon(0 0, 100% 0, 100% 70%, 50% 100%, 0 70%);
}

.resize {
    width: 13px;
    height: 13px;
    margin: 8px 0 0 10px;
}

/* yellow frame drawn over the plating rows */
.highlight {
    position: absolute;
    left: 26px;
    right: -1px;
    top: 166px;
    height: 108px;
    border: 4px solid #ff0;
    box-shadow: 2px 2px 6px rgba(0, 0, 0, 0.7), inset 2px 2px 6px rgba(0, 0, 0, 0.7);
}
```
